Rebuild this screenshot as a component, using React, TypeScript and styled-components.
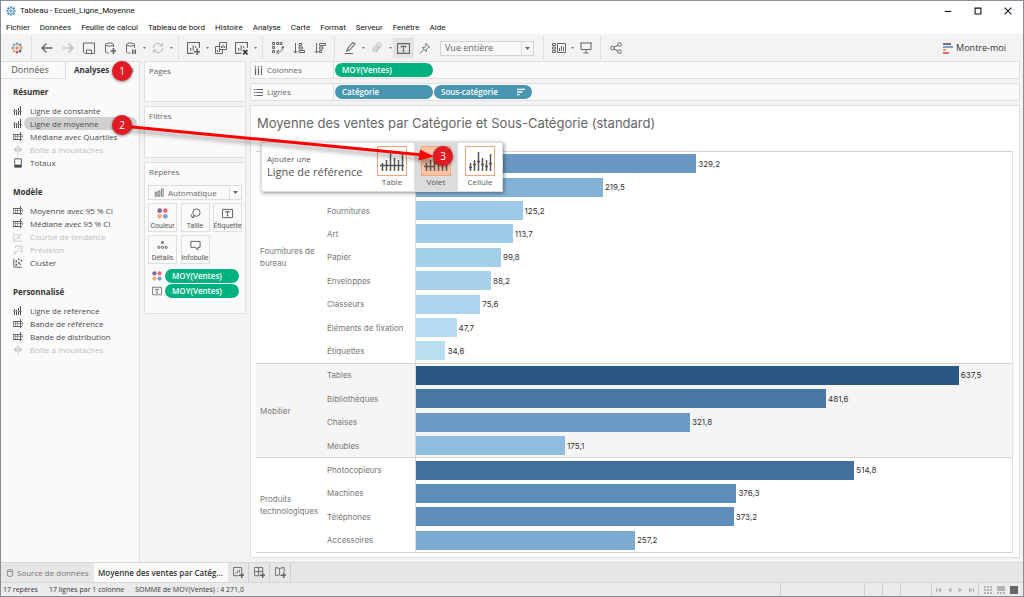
import React from "react";
import styled, { createGlobalStyle, css } from "styled-components";

const ui = `"Open Sans", "Noto Sans", sans-serif`;
const system = `Roboto, "Open Sans", sans-serif`;
const sheet = `Inter, "Open Sans", sans-serif`;
const line = "#dedede";

const GlobalStyle = createGlobalStyle`
  *, *::before, *::after { box-sizing: border-box; }
  body { margin: 0; background: #f3f3f3; font-family: ${ui}; font-size: 8px; line-height: 12px; color: #333; }
  button, select { font: inherit; color: inherit; background: none; border: 0; padding: 0; margin: 0; }
  h1, h2, h3, ul, p { margin: 0; padding: 0; font-weight: inherit; font-size: inherit; }
  ul { list-style: none; }
  svg { display: block; flex: none; }
`;

const Window = styled.div`
  position: relative;
  min-height: 100vh;
  display: flex;
  flex-direction: column;
  border: 1px solid #868c98;
  background: #f3f3f3;
  overflow: hidden;
`;

const TitleBar = styled.header`
  display: flex;
  align-items: center;
  gap: 4px;
  height: 19px;
  padding-left: 5px;
  background: #fff;
  color: #111;
  font-family: ${system};
`;
const WindowButtons = styled.div`
  margin-left: auto;
  display: flex;
`;
const WindowButton = styled.button`
  width: 30px;
  height: 18px;
  display: flex;
  align-items: center;
  justify-content: center;
`;
const MenuBar = styled.nav`
  display: flex;
  gap: 10px;
  height: 14px;
  padding: 2px 0 0 5px;
  background: #fff;
  color: #111;
  font-family: ${system};
`;

const Toolbar = styled.div`
  display: flex;
  align-items: center;
  height: 27px;
  padding: 1px 0 0 1px;
`;
const ToolGroup = styled.div`
  display: flex;
  align-items: center;
  height: 24px;
  padding: 0 4px;
  border-right: 1px solid #e0e0e0;
  &:last-of-type { border-right: 0; }
`;
const ToolButton = styled.button<{ $on?: boolean; $dim?: boolean }>`
  width: 21px;
  height: 20px;
  display: flex;
  align-items: center;
  justify-content: center;
  color: #666;
  background: ${(p) => (p.$on ? "#e2e2e2" : "none")};
  ${(p) => p.$dim && css`color: #b4b4b4;`}
`;
const CaretButton = styled.button`
  width: 6px;
  height: 20px;
  display: flex;
  align-items: center;
  justify-content: center;
  color: #777;
`;
const FitField = styled.label`
  display: flex;
  align-items: center;
  width: 94px;
  height: 15px;
  margin: 0 5px;
  padding-left: 4px;
  border: 1px solid #d4d4d4;
  background: #f8f8f8;
  color: #666;
  font-size: 9px;
`;
const Select = styled.select`
  appearance: none;
  flex: 1;
  min-width: 0;
  height: 13px;
  outline: 0;
`;
const SelectArrow = styled.span`
  width: 12px;
  align-self: stretch;
  display: flex;
  align-items: center;
  justify-content: center;
  border-left: 1px solid #dcdcdc;
  color: #666;
`;
const ShowMe = styled.button`
  display: flex;
  align-items: center;
  gap: 3px;
  margin-left: auto;
  margin-right: 17px;
  font-size: 9px;
`;

const Main = styled.main`
  flex: 1;
  display: flex;
`;
const Sidebar = styled.aside`
  width: 139px;
  flex: none;
  background: #fafafa;
  border-right: 1px solid ${line};
`;
const SideTabs = styled.div`
  display: flex;
  height: 18px;
`;
const SideTab = styled.button<{ $active?: boolean }>`
  padding-bottom: 1px;
  ${(p) =>
    p.$active
      ? css`
          flex: 1;
          display: flex;
          align-items: center;
          justify-content: space-between;
          padding: 0 5px 1px 8px;
          font-weight: 700;
          background: #fafafa;
          border-top: 1px solid ${line};
        `
      : css`width: 65px; padding-right: 6px; font-size: 9px; color: #555; border: 1px solid ${line}; border-left: 0;`}
`;
const SideGroup = styled.section`
  padding: 5px 2px 10px 12px;
`;
const SideHeading = styled.h2`
  line-height: 16px;
  font-weight: 700;
  padding-bottom: 4px;
`;
const SideItem = styled.li<{ $dim?: boolean }>`
  display: flex;
  align-items: center;
  height: 13px;
  gap: 1px;
  color: ${(p) => (p.$dim ? "#bdbdbd" : "#4a4a4a")};
`;
const SideLabel = styled.button<{ $selected?: boolean }>`
  flex: 1;
  height: 13px;
  padding-left: 6px;
  text-align: left;
  white-space: nowrap;
  border-radius: 7px;
  background: ${(p) => (p.$selected ? "#d0d0d0" : "none")};
`;

const CardColumn = styled.div`
  width: 102px;
  flex: none;
  margin-left: 4px;
  display: flex;
  flex-direction: column;
  gap: 4px;
`;
const Card = styled.section<{ $height: number }>`
  min-height: ${(p) => p.$height}px;
  padding: 3px;
  border: 1px solid #e0e0e0;
  background: #fafafa;
  color: #666;
`;
const CardTitle = styled.h2`
  padding-left: 1px;
  line-height: 12px;
`;
const MarkType = styled.label`
  display: flex;
  align-items: center;
  height: 15px;
  margin: 7px 0 3px;
  padding-left: 5px;
  gap: 4px;
  border: 1px solid #dcdcdc;
`;
const MarkGrid = styled.div`
  display: grid;
  grid-template-columns: repeat(3, 29px);
  grid-auto-rows: 29px;
  justify-content: space-between;
  gap: 3px 0;
`;
const MarkButton = styled.button`
  display: flex;
  flex-direction: column;
  align-items: center;
  justify-content: space-between;
  padding-top: 4px;
  border: 1px solid #dfdfdf;
  font-family: ${system};
  font-size: 7px;
  line-height: 10px;
  color: #555;
  white-space: nowrap;
`;
const MarkRow = styled.div`
  display: flex;
  align-items: center;
  gap: 3px;
  height: 15px;
  padding: 0 3px 0 4px;
`;
const MarkRows = styled.div`
  padding-top: 4px;
`;
const Pill = styled.button<{ $tone: "green" | "blue" }>`
  display: flex;
  align-items: center;
  justify-content: space-between;
  width: 98px;
  height: 14px;
  flex: 0 1 auto;
  padding: 0 7px;
  border-radius: 7px;
  color: #fff;
  font-weight: 600;
  background: ${(p) => (p.$tone === "green" ? "#00b180" : "#4996b2")};
`;

const Work = styled.div`
  flex: 1;
  min-width: 0;
  display: flex;
  flex-direction: column;
  gap: 4px;
  padding: 0 3px 4px 4px;
`;
const Shelf = styled.div`
  display: flex;
  height: 18px;
  border: 1px solid #e0e0e0;
  background: #fafafa;
`;
const ShelfName = styled.div`
  width: 83px;
  display: flex;
  align-items: center;
  gap: 4px;
  padding-left: 3px;
  color: #666;
  border-right: 1px solid #e0e0e0;
`;
const ShelfPills = styled.div`
  display: flex;
  align-items: center;
  gap: 1px;
  padding-left: 1px;
`;

const Viz = styled.section`
  position: relative;
  flex: 1;
  display: flex;
  flex-direction: column;
  padding: 7px 6px 4px 5px;
  background: #fff;
  border: 1px solid #e0e0e0;
`;
const VizTitle = styled.h1`
  padding-left: 1px;
  font-family: ${sheet};
  font-size: 13px;
  line-height: 20px;
  color: #666;
  white-space: nowrap;
`;
const Chart = styled.div`
  flex: 1;
  display: flex;
  flex-direction: column;
  margin-top: 18px;
  font-family: ${sheet};
  border-top: 1px solid #d4d4d4;
  border-right: 1px solid #e2e2e2;
`;
const Pane = styled.section<{ $rows: number; $shaded?: boolean }>`
  flex: ${(p) => p.$rows} 1 0;
  display: flex;
  border-bottom: 1px solid #d4d4d4;
  background: ${(p) => (p.$shaded ? "#f5f5f5" : "#fff")};
`;
const PaneName = styled.h2`
  width: 71px;
  display: flex;
  align-items: center;
  padding-left: 4px;
  color: #787878;
`;
const PaneRows = styled.ul`
  flex: 1;
  display: flex;
  flex-direction: column;
`;
const Row = styled.li`
  flex: 1;
  display: flex;
`;
const RowName = styled.span`
  width: 88px;
  display: flex;
  align-items: center;
  color: #787878;
`;
const Track = styled.div`
  flex: 1;
  display: flex;
  align-items: center;
  gap: 2px;
  border-left: 1px solid #d8d8d8;
`;
const Bar = styled.div`
  height: 19px;
  flex: none;
`;

const DropPanel = styled.div`
  position: absolute;
  left: 10px;
  top: 36px;
  display: flex;
  height: 50px;
  background: #fff;
  border: 1px solid #ddd;
  box-shadow: 1px 1px 4px rgba(0, 0, 0, 0.45);
`;
const DropText = styled.div`
  width: 108px;
  padding: 9px 0 0 5px;
  line-height: 13px;
  color: #555;
  white-space: nowrap;
`;
const DropName = styled.p`
  font-size: 11px;
`;
const DropTarget = styled.button<{ $hot?: boolean }>`
  width: 44px;
  display: flex;
  flex-direction: column;
  align-items: center;
  padding-top: 3px;
  color: #555;
  background: ${(p) => (p.$hot ? "#dcdcdc" : "none")};
`;

const SheetBar = styled.div`
  display: flex;
  height: 20px;
  background: #e6e6e6;
  border-top: 1px solid #d8d8d8;
`;
const SheetTab = styled.button<{ $active?: boolean }>`
  display: flex;
  align-items: center;
  gap: 3px;
  white-space: nowrap;
  ${(p) =>
    p.$active
      ? css`width: 134px; padding-left: 4px; background: #fbfbfb; font-weight: 600;`
      : css`width: 93px; padding-left: 5px; color: #777;`}
`;
const NewSheet = styled.button`
  width: 21px;
  display: flex;
  align-items: center;
  justify-content: center;
  color: #666;
  border-right: 1px solid #cfcfcf;
`;
const StatusBar = styled.footer`
  display: flex;
  align-items: center;
  gap: 11px;
  height: 14px;
  padding-left: 2px;
  background: #ebebeb;
  border-top: 1px solid #d8d8d8;
  font-size: 7px;
`;
const StatusCells = styled.div`
  margin-left: auto;
  display: flex;
  align-self: stretch;
`;
const StatusCell = styled.div<{ $width: number }>`
  width: ${(p) => p.$width}px;
  display: flex;
  align-items: center;
  justify-content: space-evenly;
  border-left: 1px solid #cfcfcf;
`;
const StatusButton = styled.button`
  color: #b4b4b4;
`;

const Arrow = styled.svg`
  position: absolute;
  left: 0;
  top: 0;
  pointer-events: none;
  filter: drop-shadow(2px 4px 2px rgba(0, 0, 0, 0.35));
`;
const Step = styled.span<{ $x: number; $y: number }>`
  position: absolute;
  left: ${(p) => p.$x}px;
  top: ${(p) => p.$y}px;
  width: 20px;
  height: 20px;
  border-radius: 50%;
  background: #e01b24;
  box-shadow: 0 1px 3px rgba(0, 0, 0, 0.5);
  color: #fff;
  font-size: 10px;
  line-height: 20px;
  text-align: center;
`;

type IconProps = { d?: string; fill?: string; size?: number; w?: number; children?: React.ReactNode };
const Icon = ({ d, fill, size = 12, w = 1, children }: IconProps) => (
  <svg width={size} height={size} viewBox="0 0 12 12" fill="none" stroke="currentColor" strokeWidth={w} aria-hidden="true">
    {d && <path d={d} />}
    {fill && <path d={fill} fill="currentColor" stroke="none" />}
    {children}
  </svg>
);
const Caret = () => (
  <svg width="5" height="3" viewBox="0 0 5 3" aria-hidden="true">
    <path d="M0 0h5L2.5 3z" fill="currentColor" />
  </svg>
);
const SmallCaret = () => (
  <svg width="3" height="2" viewBox="0 0 3 2" aria-hidden="true">
    <path d="M0 0h3L1.5 2z" fill="currentColor" />
  </svg>
);

const Logo = ({ blue }: { blue?: boolean }) => {
  const c = blue ? Array(9).fill("#3f7fae") : ["#e8762c", "#5b879b", "#c72037", "#59879b", "#e8762c", "#7099a6", "#5c6692", "#eb912c", "#1f447e"];
  const p = [[6, 6, 2], [6, 1.8, 1.3], [6, 10.2, 1.3], [1.8, 6, 1.3], [10.2, 6, 1.3], [3, 3, 1.5], [9, 3, 1.5], [3, 9, 1.5], [9, 9, 1.5]];
  return (
    <svg width={blue ? 10 : 12} height={blue ? 10 : 12} viewBox="0 0 12 12" aria-hidden="true">
      {blue && <rect width="12" height="12" fill="#e4eef5" />}
      {p.map(([x, y, r], i) => (
        <path key={i} d={`M${x - r} ${y}h${2 * r}M${x} ${y - r}v${2 * r}`} stroke={c[i]} strokeWidth="1" />
      ))}
    </svg>
  );
};
const ColorDots = ({ size }: { size: number }) => (
  <svg width={size} height={size} viewBox="0 0 10 10" aria-hidden="true">
    <circle cx="2.4" cy="2.4" r="2.1" fill="#83638f" />
    <circle cx="7.6" cy="2.4" r="2.1" fill="#f0697a" />
    <circle cx="2.4" cy="7.6" r="2.1" fill="#f4a97a" />
    <circle cx="7.6" cy="7.6" r="2.1" fill="#7b9fcd" />
  </svg>
);

const plus = "M8.7 6h1.600v2.200h2.200v1.600h-2.200V12H8.700V9.800H6.500V8.200h2.200z";
const chartBox = "M6 10.500H.5v-10h11V5.500M3.500 8V5.500M5.700 8V3M8 5.500V4";

const sideIcons: Record<string, React.ReactNode> = {
  line: (
    <svg width="10" height="9" viewBox="0 0 10 9" fill="currentColor" aria-hidden="true">
      <path d="M1 3h1v2H1zM1 6h1v3H1zM3 4h1v1H3zM3 6h1v3H3zM5 2h1v3H5zM5 6h1v3H5zM7 0h1v9H7z" />
      <path d="M0 5h9v1H0z" opacity="0.5" />
    </svg>
  ),
  band: (
    <svg width="10" height="9" viewBox="0 0 10 9" fill="currentColor" aria-hidden="true">
      <path d="M0 2h9v1H0zM0 7h9v1H0zM7 0h1v9H7z" opacity="0.85" />
      <path d="M0 4h10v1H0zM2 3h1v5H2zM4 2h1v5H4zM9 3h1v3H9zM0 2h1v6H0z" opacity="0.55" />
    </svg>
  ),
  box: <Icon size={10} d="M6 0v3M6 9v3M3 3.500h6v4H3zM0.500 5.500h11" />,
  total: <Icon size={10} d="M2 1h8v10H2z" fill="M2 8h8v3H2z" />,
  trend: <Icon size={10} d="M1 1v10h10M2.500 9.500L10 3" fill="M3 2h1.500v1.500H3zM6 3h1.500v1.500H6zM7 7h1.500v1.500H7z" />,
  forecast: <Icon size={10} d="M3 4V1.500h8V8H8M9 3.500L2 11M2 7v4" />,
  cluster: <Icon size={10} d="M1 1v10h10" fill="M3 3h2v2H3zM6 1h1.500v1.500H6zM9 2h2v2H9zM3 7h2v2H3zM6 5h2v2H6zM8 7h1.500v1.500H8z" />,
};

const sideGroups = [
  {
    title: "Résumer",
    items: [["line", "Ligne de constante"], ["line", "Ligne de moyenne", "sel"], ["band", "Médiane avec Quartiles"], ["box", "Boîte à moustaches", "dim"], ["total", "Totaux"]],
  },
  {
    title: "Modèle",
    items: [["band", "Moyenne avec 95 % CI"], ["band", "Médiane avec 95 % CI"], ["trend", "Courbe de tendance", "dim"], ["forecast", "Prévision", "dim"], ["cluster", "Cluster"]],
  },
  {
    title: "Personnalisé",
    items: [["line", "Ligne de référence"], ["band", "Bande de référence"], ["band", "Bande de distribution"], ["box", "Boîte à moustaches", "dim"]],
  },
];

type Datum = [name: string, value: number, color: string];
const scaleMax = 700;
const panes: { name: string; shaded?: boolean; rows: Datum[] }[] = [
  {
    name: "Fournitures de bureau",
    rows: [
      ["", 329.2, "#6999c3"],
      ["", 219.5, "#83b2d7"],
      ["Fournitures", 125.2, "#9dc9e6"],
      ["Art", 113.7, "#a0cbe8"],
      ["Papier", 99.8, "#a4cfe9"],
      ["Enveloppes", 88.2, "#a8d2eb"],
      ["Classeurs", 75.6, "#acd5ed"],
      ["Éléments de fixation", 47.7, "#b4dbf0"],
      ["Étiquettes", 34.6, "#b9ddf1"],
    ],
  },
  {
    name: "Mobilier",
    shaded: true,
    rows: [
      ["Tables", 637.5, "#2a5783"],
      ["Bibliothèques", 481.6, "#4878a6"],
      ["Chaises", 321.8, "#6b9ac4"],
      ["Meubles", 175.1, "#90bddd"],
    ],
  },
  {
    name: "Produits technologiques",
    rows: [
      ["Photocopieurs", 514.8, "#4271a0"],
      ["Machines", 376.3, "#5d8eba"],
      ["Téléphones", 373.2, "#5e8fbb"],
      ["Accessoires", 257.2, "#7aaad0"],
    ],
  },
];
const format = (n: number) => n.toFixed(1).replace(".", ",");

const menus = ["Fichier", "Données", "Feuille de calcul", "Tableau de bord", "Histoire", "Analyse", "Carte", "Format", "Serveur", "Fenêtre", "Aide"];

const DropIcon = ({ kind, hot }: { kind: "table" | "volet" | "cell"; hot?: boolean }) => (
  <svg width="30" height="30" viewBox="0 0 30 30" aria-hidden="true">
    <rect x="0.5" y="0.5" width="29" height="29" fill={hot ? "#fbc4a4" : "#fff"} stroke="#f0a77c" />
    <path d="M5.500 17v8M9.500 14v11M13.500 6v19M17.500 12v13M21.500 14v11M25.500 8v17" stroke="#555" strokeWidth="1.500" />
    <path
      d={kind === "table" ? "M3 19.500h24" : kind === "volet" ? "M3 20.500h10M13 17.500h14" : "M4 21.500h3M8 18.500h3M12 15.500h3M16 18.500h3M20 20.500h3M24 17.500h3"}
      stroke="#555"
      strokeWidth="1.500"
    />
  </svg>
);

export default function App() {
  return (
    <Window>
      <GlobalStyle />
      <TitleBar>
        <Logo blue />
        <span>Tableau - Ecueil_Ligne_Moyenne</span>
        <WindowButtons>
          <WindowButton aria-label="Réduire"><Icon size={10} d="M2 6.500h8" w={1.3} /></WindowButton>
          <WindowButton aria-label="Agrandir"><Icon size={10} d="M2.500 2.500h7v7h-7z" w={1.3} /></WindowButton>
          <WindowButton aria-label="Fermer"><Icon size={10} d="M2 2l8 8M10 2l-8 8" w={1.3} /></WindowButton>
        </WindowButtons>
      </TitleBar>
      <MenuBar>
        {menus.map((m) => <button key={m}>{m}</button>)}
      </MenuBar>

      <Toolbar>
        <ToolGroup>
          <ToolButton aria-label="Accueil"><Logo /></ToolButton>
        </ToolGroup>
        <ToolGroup>
          <ToolButton aria-label="Annuler"><Icon d="M11.500 6H1M5.500 1.500L1 6l4.500 4.500" w={1.3} /></ToolButton>
          <ToolButton $dim aria-label="Rétablir"><Icon d="M.5 6H11M6.500 1.500L11 6l-4.500 4.500" w={1.2} /></ToolButton>
          <ToolButton aria-label="Enregistrer"><Icon d="M.5 1h11v10.500H2L.5 10zM3.500 11V8h5v3" /></ToolButton>
          <ToolButton aria-label="Nouvelle source"><Icon d="M1.500 2.500v7.500c1 1 2.500 1 3.500 1M9.500 5V2.500M1.500 2.500c0-2 8-2 8 0s-8 2-8 0" fill={plus} /></ToolButton>
          <ToolButton aria-label="Suspendre"><Icon d="M1.500 2.500v7.500c1 1 3 1 4 1M9.500 6V2.500M1.500 2.500c0-2 8-2 8 0s-8 2-8 0" fill="M7 7.500h1.500V12H7zM9.500 7.500H11V12H9.500z" /></ToolButton>
          <CaretButton aria-label="Options de mise à jour"><SmallCaret /></CaretButton>
          <ToolButton $dim aria-label="Actualiser"><Icon d="M1 6a5 5 0 0 1 9-2.500M11 6a5 5 0 0 1-9 2.500M10.500 1v3h-3M1.500 11V8h3" /></ToolButton>
          <CaretButton aria-label="Options d'actualisation"><SmallCaret /></CaretButton>
        </ToolGroup>
        <ToolGroup>
          <ToolButton aria-label="Nouvelle feuille"><Icon size={13} d={chartBox} fill={plus} /></ToolButton>
          <CaretButton aria-label="Types de feuille"><SmallCaret /></CaretButton>
          <ToolButton aria-label="Dupliquer"><Icon d="M4.500.5h7v7h-7zM4 4.500H.5v7h7V8M6.500 6V4M8 6V2.500M9.700 6V4M2.500 10V8M4.500 10V7" /></ToolButton>
          <ToolButton aria-label="Effacer"><Icon size={13} d={chartBox}><path d="M7.500 7.500l4 4M11.500 7.500l-4 4" stroke="#333" strokeWidth="1.500" /></Icon></ToolButton>
          <CaretButton aria-label="Options d'effacement"><SmallCaret /></CaretButton>
        </ToolGroup>
        <ToolGroup>
          <ToolButton aria-label="Permuter"><Icon d="M.5.5h2v2h-2zM4.500.5h2v2h-2zM8 .5h2v2H8zM.5 4.500h2v2h-2zM.5 8.500h2v2h-2zM11 4.500c0 4-2 5.500-6 5.500M9.500 6L11 4l1 2M7 8l-2.500 2L7 12" /></ToolButton>
          <ToolButton aria-label="Tri croissant"><Icon d="M2.500 1v10M.5 9l2 2 2-2M6 1.500h2.500v2H6zM6 5h3.500v2H6zM6 8.500h5.500v2H6z" /></ToolButton>
          <ToolButton aria-label="Tri décroissant"><Icon d="M2.500 1v10M.5 9l2 2 2-2M5.500 1.500h6v2h-6zM5.500 5H9v2H5.500zM5.500 8.500h2v2h-2z" /></ToolButton>
        </ToolGroup>
        <ToolGroup>
          <ToolButton aria-label="Surligner"><Icon d="M3 9l1-3 5-5.500 2 1.500-5.500 6zM1 11.500h8" w={1.1} /></ToolButton>
          <CaretButton aria-label="Options de surlignage"><SmallCaret /></CaretButton>
          <ToolButton $dim aria-label="Grouper"><Icon d="M8.500 4L4.500 9c-2 1.500-3.500 0-2.500-2l4.500-5.500c2-2 4.500 0 3.500 2L5 10.500M8 2.500L3.500 8" /></ToolButton>
          <CaretButton aria-label="Options de groupe"><SmallCaret /></CaretButton>
          <ToolButton $on aria-label="Étiquettes de repère"><Icon size={13} d="M.5 1.500h11v9H.5zM4 5V4h4v1M6 4v4.500M5 8.500h2" /></ToolButton>
          <ToolButton aria-label="Fixer"><Icon size={11} d="M7.500.5l4 4-1.500.5-2 2v2.500L3.500 5H6l1.500-2zM5.500 7L1 11.500" /></ToolButton>
          <FitField>
            <Select aria-label="Ajustement"><option>Vue entière</option></Select>
            <SelectArrow><Caret /></SelectArrow>
          </FitField>
        </ToolGroup>
        <ToolGroup>
          <ToolButton aria-label="Fiches">
            <svg width="14" height="10" viewBox="0 0 14 10" fill="none" stroke="currentColor" aria-hidden="true">
              <path d="M.5.5h3v2h-3zM.5 4h3v2h-3zM.5 7.500h3v2h-3zM5.500.5h8v9h-8z" />
              <path d="M7.500 8V5M9.500 8V3M11.500 8V4" />
            </svg>
          </ToolButton>
          <CaretButton aria-label="Options des fiches"><SmallCaret /></CaretButton>
          <ToolButton aria-label="Présentation"><Icon d="M0 1h12M1 1v6.500h10V1M6 7.500v3M3.500 11h5" /></ToolButton>
        </ToolGroup>
        <ToolGroup>
          <ToolButton aria-label="Partager"><Icon d="M4 5.200l4-2M4 7l4 2"><circle cx="2.500" cy="6" r="1.800" /><circle cx="9.500" cy="2.500" r="1.800" /><circle cx="9.500" cy="9.500" r="1.800" /></Icon></ToolButton>
        </ToolGroup>
        <ShowMe>
          <svg width="10" height="11" viewBox="0 0 10 11" aria-hidden="true">
            <path d="M0 1h8" stroke="#83638f" strokeWidth="2" />
            <path d="M0 4h10" stroke="#7b9fcd" strokeWidth="2" />
            <path d="M0 7h3" stroke="#f4a261" strokeWidth="2" />
            <path d="M0 10h6" stroke="#ee6677" strokeWidth="2" />
          </svg>
          Montre-moi
        </ShowMe>
      </Toolbar>

      <Main>
        <Sidebar>
          <SideTabs>
            <SideTab>Données</SideTab>
            <SideTab $active>Analyses<Icon size={5} d="M6 0l4 4H2zM6 12l4-4H2z" w={1.5} /></SideTab>
          </SideTabs>
          {sideGroups.map((g) => (
            <SideGroup key={g.title}>
              <SideHeading>{g.title}</SideHeading>
              <ul>
                {g.items.map(([icon, label, state]) => (
                  <SideItem key={label} $dim={state === "dim"}>
                    {sideIcons[icon]}
                    <SideLabel $selected={state === "sel"}>{label}</SideLabel>
                  </SideItem>
                ))}
              </ul>
            </SideGroup>
          ))}
        </Sidebar>

        <CardColumn>
          <Card $height={41}><CardTitle>Pages</CardTitle></Card>
          <Card $height={52}><CardTitle>Filtres</CardTitle></Card>
          <Card $height={152}>
            <CardTitle>Repères</CardTitle>
            <MarkType>
              <Icon size={10} d="M1.500 5h2v5h-2zM5 3.500h2V10H5zM9 1h2v9H9z" />
              <Select aria-label="Type de repère"><option>Automatique</option></Select>
              <SelectArrow><Caret /></SelectArrow>
            </MarkType>
            <MarkGrid>
              <MarkButton><ColorDots size={11} />Couleur</MarkButton>
              <MarkButton><Icon size={11} d="M4 8.500L2 11M1.500 7a2 2 0 1 0 4 2"><circle cx="7" cy="5" r="4" /></Icon>Taille</MarkButton>
              <MarkButton><Icon size={11} d="M.5 1.500h11v9H.5zM4 5V4h4v1M6 4v4.500M5 8.500h2" />Étiquette</MarkButton>
              <MarkButton><Icon size={11} fill="M4.800 1.500h2.400V4H4.800z"><circle cx="2" cy="8" r="1.200" /><circle cx="6" cy="8" r="1.200" /><circle cx="10" cy="8" r="1.200" /></Icon>Détails</MarkButton>
              <MarkButton><Icon size={11} d="M1 1.500h10V8H8.500v3L6 8H1z" />Infobulle</MarkButton>
            </MarkGrid>
            <MarkRows>
              <MarkRow><ColorDots size={10} /><Pill $tone="green">MOY(Ventes)</Pill></MarkRow>
              <MarkRow><Icon size={10} d="M.5 1.500h11v9H.5zM4 5V4h4v1M6 4v4.500M5 8.500h2" /><Pill $tone="green">MOY(Ventes)</Pill></MarkRow>
            </MarkRows>
          </Card>
        </CardColumn>

        <Work>
          <Shelf>
            <ShelfName><Icon size={9} d="M2 0v2M2 3v9M6 0v2M6 3v9M10 0v2M10 3v9" w={1.6} />Colonnes</ShelfName>
            <ShelfPills><Pill $tone="green">MOY(Ventes)</Pill></ShelfPills>
          </Shelf>
          <Shelf>
            <ShelfName><Icon size={9} d="M0 2h2M3 2h9M0 6h2M3 6h9M0 10h2M3 10h9" w={1.6} />Lignes</ShelfName>
            <ShelfPills>
              <Pill $tone="blue">Catégorie</Pill>
              <Pill $tone="blue">Sous-catégorie<Icon size={8} d="M0 2h12M0 6h8M0 10h4" w={2} /></Pill>
            </ShelfPills>
          </Shelf>
          <Viz>
            <VizTitle>Moyenne des ventes par Catégorie et Sous-Catégorie (standard)</VizTitle>
            <Chart>
              {panes.map((p) => (
                <Pane key={p.name} $rows={p.rows.length} $shaded={p.shaded}>
                  <PaneName>{p.name}</PaneName>
                  <PaneRows>
                    {p.rows.map(([name, value, color]) => (
                      <Row key={value}>
                        <RowName>{name}</RowName>
                        <Track>
                          <Bar style={{ width: `${(value / scaleMax) * 100}%`, background: color }} />
                          {format(value)}
                        </Track>
                      </Row>
                    ))}
                  </PaneRows>
                </Pane>
              ))}
            </Chart>
            <DropPanel>
              <DropText>
                <p>Ajouter une</p>
                <DropName>Ligne de référence</DropName>
              </DropText>
              <DropTarget><DropIcon kind="table" />Table</DropTarget>
              <DropTarget $hot><DropIcon kind="volet" hot />Volet</DropTarget>
              <DropTarget><DropIcon kind="cell" />Cellule</DropTarget>
            </DropPanel>
          </Viz>
        </Work>
      </Main>

      <SheetBar>
        <SheetTab><Icon size={8} d="M2 2.500v7c0 2 8 2 8 0v-7M2 2.500c0-2 8-2 8 0s-8 2-8 0" w={1.2} />Source de données</SheetTab>
        <SheetTab $active>Moyenne des ventes par Catég...</SheetTab>
        <NewSheet aria-label="Nouvelle feuille de calcul"><Icon size={11} d="M6 9.500H.5v-9h9V5.500M3 7V6M5 7V4M7 6V3" fill={plus} /></NewSheet>
        <NewSheet aria-label="Nouveau tableau de bord"><Icon size={11} d="M6 9.500H.5v-9h9V5.500M.5 5h9M5 .5v9" fill={plus} /></NewSheet>
        <NewSheet aria-label="Nouvelle histoire"><Icon size={11} d="M6 9.500L5 8.500.5 9.500v-9L5 1.500l5-1V5.500M5 1.500v7" fill={plus} /></NewSheet>
      </SheetBar>
      <StatusBar>
        <span>17 repères</span>
        <span>17 lignes par 1 colonne</span>
        <span>SOMME de MOY(Ventes) : 4 271,0</span>
        <StatusCells>
          <StatusCell $width={84} />
          <StatusCell $width={18} />
          <StatusCell $width={18} />
          <StatusCell $width={31} />
          <StatusCell $width={47}>
            <StatusButton aria-label="Première"><Icon size={6} fill="M0 1h2v10H0zM10 1v10L3 6z" /></StatusButton>
            <StatusButton aria-label="Précédente"><Icon size={6} fill="M9 1v10L2 6z" /></StatusButton>
            <StatusButton aria-label="Suivante"><Icon size={6} fill="M3 1v10l7-5z" /></StatusButton>
            <StatusButton aria-label="Dernière"><Icon size={6} fill="M10 1h2v10h-2zM2 1v10l7-5z" /></StatusButton>
          </StatusCell>
          <StatusCell $width={45}>
            <StatusButton aria-label="Vignettes"><Icon size={8} fill="M0 0h3v3H0zM4.500 0h3v3h-3zM9 0h3v3H9zM0 4.500h3v3H0zM4.500 4.500h3v3h-3zM9 4.500h3v3H9zM0 9h3v3H0zM4.500 9h3v3h-3zM9 9h3v3H9z" /></StatusButton>
            <StatusButton aria-label="Pellicule"><Icon size={8} fill="M0 0h12v7.500H0zM0 9h3v3H0zM4.500 9h3v3h-3zM9 9h3v3H9z" /></StatusButton>
            <StatusButton aria-label="Onglets"><svg width="8" height="8" viewBox="0 0 8 8"><rect width="8" height="8" fill="#666" /></svg></StatusButton>
          </StatusCell>
        </StatusCells>
      </StatusBar>

      <Arrow width="460" height="180" viewBox="0 0 460 180" aria-hidden="true">
        <path d="M121 125L422 154" stroke="#fe0000" strokeWidth="3" />
        <path d="M419 148.500L433 155.500L417.500 159.500z" fill="#fe0000" />
      </Arrow>
      <Step $x={111} $y={60}>1</Step>
      <Step $x={111} $y={114}>2</Step>
      <Step $x={432} $y={145}>3</Step>
    </Window>
  );
}
